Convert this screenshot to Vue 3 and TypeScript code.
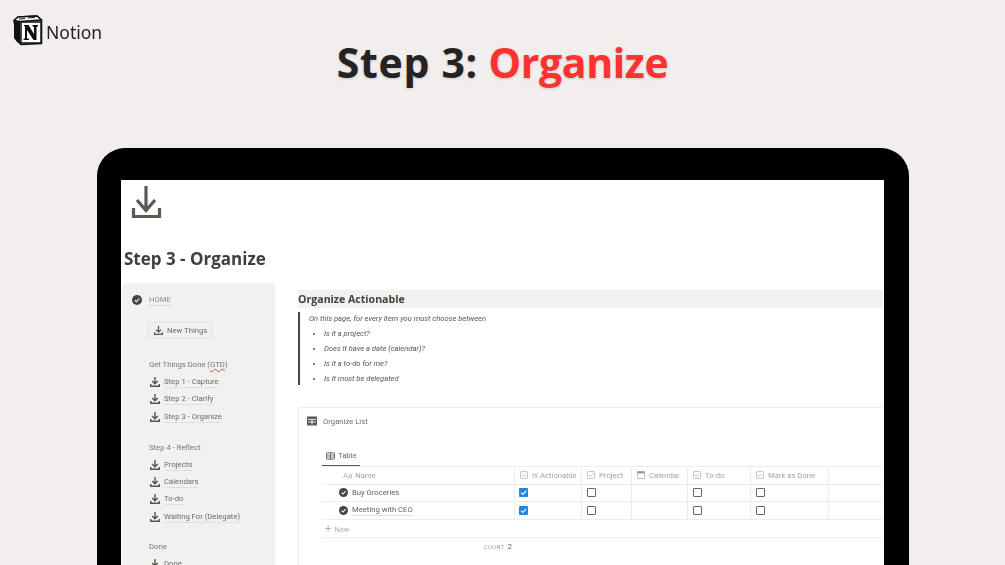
<script setup lang="ts">
const gtd = ['Step 1 - Capture', 'Step 2 - Clarify', 'Step 3 - Organize']
const reflect = ['Projects', 'Calendars', 'To-do', 'Waiting For (Delegate)']
const bullets = ['Is it a project?', 'Does it have a date (calendar)?', 'Is it a to-do for me?', 'Is it must be delegated']
const columns = [
  { label: 'Is Actionable', icon: 'check' },
  { label: 'Project', icon: 'check' },
  { label: 'Calendar', icon: 'cal' },
  { label: 'To-do', icon: 'check' },
  { label: 'Mark as Done', icon: 'check' },
]
const rows = [
  { name: 'Buy Groceries', underline: false },
  { name: 'Meeting with CEO', underline: true },
]
</script>

<template>
  <div class="page">
    <header class="top">
      <div class="brand">
        <svg class="logo" viewBox="0 0 30 31" width="30" height="31">
          <path d="M1 5.5 L4.5 25 L8 29.5 L28.5 28.5 L28.5 5 L24 1 L5 2 Z" fill="#fff" stroke="#111" stroke-width="1.6" stroke-linejoin="round" />
          <path d="M1 5.5 L5 2 L24 1 L28.5 5 L7 6.5 Z" fill="#fff" stroke="#111" stroke-width="1.6" stroke-linejoin="round" />
          <path d="M1 5.5 L7 6.5 L7.5 29.5 L4 27 L1 23 Z" fill="#111" />
          <path d="M6 4 L12 3.5 M15 3 L22 2.5" stroke="#111" stroke-width="1" />
          <rect x="8" y="7" width="20" height="21" fill="#fff" stroke="#111" stroke-width="1.5" />
          <path d="M11 10 H15.5 L21 19 V12 L19.5 11.2 V10 H25 V11.2 L23.5 12 V25 H20.5 L14 15 V23.2 L16 24 V25 H10.5 V24 L12 23.2 V11.6 L11 11 Z" fill="#111" />
        </svg>
        <span class="brand-name">Notion</span>
      </div>
      <h1 class="headline"><span class="lead">Step 3:</span> <span class="accent">Organize</span></h1>
      <div></div>
    </header>

    <section class="device">
      <div class="screen">
        <svg class="page-icon" viewBox="0 0 31 33" width="31" height="33">
          <path d="M15 0 V25 M6 14 L15 24.5 L24 14" fill="none" stroke="#5a5a55" stroke-width="3.2" />
          <path d="M2.5 22 V30.5 H28.5 V22" fill="none" stroke="#5a5a55" stroke-width="3.2" />
        </svg>
        <h2 class="page-title">Step 3 - Organize</h2>

        <div class="columns">
          <aside class="sidebar">
            <div class="home">
              <svg class="disc" viewBox="0 0 10 10" width="10" height="10">
                <circle cx="5" cy="5" r="5" fill="#444441" />
                <path d="M2.8 5.2 L4.4 6.7 L7.3 3.6" fill="none" stroke="#f1f1f0" stroke-width="1.2" />
              </svg>
              <span class="home-link">HOME</span>
            </div>
            <div class="new-things">
              <svg class="dl" viewBox="0 0 10 10" width="9" height="9">
                <path d="M5 0 V6.5 M2.2 4 L5 6.8 L7.8 4" fill="none" stroke="#55554f" stroke-width="1.4" />
                <path d="M.7 7 V9.3 H9.3 V7" fill="none" stroke="#55554f" stroke-width="1.4" />
              </svg>
              New Things
            </div>

            <div class="group-title first">Get Things Done (<span class="squiggle">GTD</span>)</div>
            <div v-for="item in gtd" :key="item" class="nav-item">
              <svg class="dl" viewBox="0 0 10 10" width="10" height="10">
                <path d="M5 0 V6.5 M2.2 4 L5 6.8 L7.8 4" fill="none" stroke="#55554f" stroke-width="1.4" />
                <path d="M.7 7 V9.3 H9.3 V7" fill="none" stroke="#55554f" stroke-width="1.4" />
              </svg>
              <span class="nav-link">{{ item }}</span>
            </div>

            <div class="group-title">Step 4 - Reflect</div>
            <div v-for="item in reflect" :key="item" class="nav-item">
              <svg class="dl" viewBox="0 0 10 10" width="10" height="10">
                <path d="M5 0 V6.5 M2.2 4 L5 6.8 L7.8 4" fill="none" stroke="#55554f" stroke-width="1.4" />
                <path d="M.7 7 V9.3 H9.3 V7" fill="none" stroke="#55554f" stroke-width="1.4" />
              </svg>
              <span class="nav-link">{{ item }}</span>
            </div>

            <div class="group-title">Done</div>
            <div class="nav-item">
              <svg class="dl" viewBox="0 0 10 10" width="10" height="10">
                <path d="M5 0 V6.5 M2.2 4 L5 6.8 L7.8 4" fill="none" stroke="#55554f" stroke-width="1.4" />
                <path d="M.7 7 V9.3 H9.3 V7" fill="none" stroke="#55554f" stroke-width="1.4" />
              </svg>
              <span class="nav-link">Done</span>
            </div>
          </aside>

          <main class="content">
            <h3 class="section-head">Organize Actionable</h3>
            <blockquote class="quote">
              <p class="quote-lead">On this page, for every item you must choose between</p>
              <ul class="bullets">
                <li v-for="b in bullets" :key="b">{{ b }}</li>
              </ul>
            </blockquote>

            <div class="card">
              <div class="card-title">
                <svg viewBox="0 0 10 10" width="10" height="10">
                  <rect x="0" y="0.5" width="10" height="9" rx="1" fill="#55554f" />
                  <path d="M1 3.4 H9 M5 3.4 V8.6 M1 6 H9" stroke="#fff" stroke-width=".9" />
                </svg>
                <span>Organize List</span>
              </div>
              <div class="tab">
                <svg viewBox="0 0 10 8" width="9" height="8">
                  <rect x=".5" y=".5" width="9" height="7" rx="1" fill="none" stroke="#55554f" />
                  <path d="M.5 3 H9.5 M.5 5.2 H9.5 M5 .5 V7.5" stroke="#55554f" stroke-width=".8" />
                </svg>
                Table
              </div>

              <div class="tbl">
                <div class="tr head">
                  <div class="td name-col"><span class="aa">Aa</span> Name</div>
                  <div v-for="c in columns" :key="c.label" class="td">
                    <svg v-if="c.icon === 'check'" viewBox="0 0 8 8" width="8" height="8">
                      <rect x=".5" y=".5" width="7" height="7" rx=".8" fill="none" stroke="#aaa" stroke-width=".7" />
                      <path d="M2 4 L3.5 5.5 L6 2.5" fill="none" stroke="#aaa" stroke-width=".7" />
                    </svg>
                    <svg v-else viewBox="0 0 8 8" width="8" height="8">
                      <rect x=".3" y=".5" width="7.4" height="7" rx=".8" fill="none" stroke="#999" stroke-width=".7" />
                      <rect x=".3" y=".5" width="7.4" height="2" fill="#999" />
                    </svg>
                    {{ c.label }}
                  </div>
                  <div class="td last"></div>
                </div>
                <div v-for="r in rows" :key="r.name" class="tr">
                  <div class="td name-col body-name">
                    <svg viewBox="0 0 10 10" width="9" height="9">
                      <circle cx="5" cy="5" r="5" fill="#444441" />
                      <path d="M2.8 5.2 L4.4 6.7 L7.3 3.6" fill="none" stroke="#fff" stroke-width="1.2" />
                    </svg>
                    <span :class="{ 'nav-link': r.underline }">{{ r.name }}</span>
                  </div>
                  <div class="td"><span class="box on">
                    <svg viewBox="0 0 9 9" width="9" height="9"><path d="M2 4.6 L3.9 6.4 L7.2 2.8" fill="none" stroke="#fff" stroke-width="1.1" /></svg>
                  </span></div>
                  <div class="td"><span class="box"></span></div>
                  <div class="td"></div>
                  <div class="td"><span class="box"></span></div>
                  <div class="td"><span class="box"></span></div>
                  <div class="td last"></div>
                </div>
                <div class="new-row"><span class="plus">+</span> New</div>
                <div class="count"><span class="count-label">COUNT</span> <span class="count-num">2</span></div>
              </div>
            </div>
          </main>
        </div>
      </div>
    </section>
  </div>
</template>

<style>
html, body { margin: 0; overflow: hidden; }
</style>

<style scoped>
.page {
  width: 1005px;
  height: 565px;
  overflow: hidden;
  background: #f1eeed;
  font-family: "Open Sans", sans-serif;
}
.top {
  height: 148px;
  box-sizing: border-box;
  display: grid;
  grid-template-columns: 1fr auto 1fr;
  align-items: start;
}
.brand {
  display: flex;
  align-items: center;
  gap: 3px;
  padding: 15px 0 0 13px;
  filter: blur(.3px);
}
.logo { flex: none; }
.brand-name {
  font-family: "Noto Sans", sans-serif;
  font-size: 17.5px;
  padding-top: 3px;
  color: #222;
}
.headline {
  margin: 34px 0 0;
  font-size: 41px;
  line-height: 56px;
  font-weight: 700;
  color: #232323;
  text-shadow: 0 1px 3px rgba(0, 0, 0, .16);
  white-space: nowrap;
}
.lead { letter-spacing: .7px; }
.accent { color: #ff3131; letter-spacing: -.4px; }
.device {
  margin: 0 96px 0 97px;
  height: 450px;
  box-sizing: border-box;
  background: #000;
  border-radius: 28px 28px 0 0;
  padding: 32px 25px 0 24px;
}
.screen {
  height: 100%;
  background: #fff;
  overflow: hidden;
  color: #37352f;
  filter: blur(.45px);
}
.page-icon { display: block; margin: 6px 0 0 10px; }
.page-title {
  margin: 27px 0 0 3px;
  font-size: 17px;
  line-height: 25px;
  font-weight: 700;
  color: #3f3e39;
}
.columns {
  display: flex;
  margin-top: 13px;
}
.sidebar {
  flex: none;
  width: 151px;
  margin-left: 1px;
  height: 400px;
  background: #f1f1f0;
  border-radius: 3px;
  padding: 10px 0 0 10px;
  box-sizing: border-box;
  font-family: Roboto, sans-serif;
  font-size: 7.7px;
  color: #6b6a66;
  box-shadow: 2px -1px 0 #fbeeee;
}
.home { display: flex; align-items: center; gap: 7px; height: 12px; }
.disc { flex: none; }
.home-link { color: #8b8a86; border-bottom: 1px solid #d8d8d5; line-height: 11px; }
.new-things {
  margin: 16px 0 0 16px;
  width: 64px;
  height: 17px;
  display: flex;
  align-items: center;
  gap: 4px;
  padding-left: 5px;
  box-sizing: border-box;
  border: 1px solid #e2e2df;
  border-radius: 3px;
  white-space: nowrap;
}
.group-title { margin: 16.3px 0 2.4px 17px; line-height: 12px; color: #77766f; }
.group-title.first { margin-top: 20px; }
.squiggle { text-decoration: underline wavy #e03e3e .6px; }
.nav-item {
  height: 17.3px;
  display: flex;
  align-items: center;
  gap: 4px;
  margin-left: 18px;
}
.dl { flex: none; }
.nav-link { border-bottom: 1px solid #dfdfdc; line-height: 11px; }
.content { flex: none; width: 585px; margin-left: 25px; }
.section-head {
  margin: 6px 0 0;
  height: 18px;
  line-height: 18px;
  background: #f1f1f0;
  font-size: 10.6px;
  font-weight: 700;
  color: #42413c;
}
.quote {
  margin: 4px 0 0;
  height: 73px;
  border-left: 2px solid #45443f;
  padding-left: 9px;
  font-family: Roboto, sans-serif;
  font-style: italic;
  font-size: 7.6px;
  color: #55544f;
}
.quote-lead { margin: 0; line-height: 14px; }
.bullets { margin: 0; padding: 0 0 0 15px; }
.bullets li { height: 15px; line-height: 15px; }
.card {
  margin-top: 22px;
  height: 170px;
  border: 1px solid #ededeb;
  border-right: 0;
  border-radius: 3px 0 0 0;
  font-family: Roboto, sans-serif;
}
.card-title {
  display: flex;
  align-items: center;
  gap: 6px;
  padding: 6px 0 0 8px;
  font-size: 7.7px;
  color: #6e6d68;
  height: 14px;
}
.tab {
  margin: 16px 0 0 23px;
  width: 38px;
  height: 22px;
  display: flex;
  align-items: center;
  gap: 3px;
  padding: 2px 0 0 4px;
  box-sizing: border-box;
  font-size: 7.7px;
  color: #6b6a66;
  border-bottom: 1.5px solid #55554f;
}
.tbl { margin-left: 23px; font-size: 7.7px; color: #65645f; }
.tr {
  display: grid;
  grid-template-columns: 193px 67px 50px 56px 63px 78px 1fr;
  height: 16.5px;
  border-bottom: 1px solid #ededeb;
  box-sizing: content-box;
}
.tr.head { border-top: 1px solid #ededeb; color: #a3a29e; height: 16.5px; }
.td {
  display: flex;
  align-items: center;
  gap: 4px;
  padding-left: 5px;
  border-right: 1px solid #ededeb;
  box-sizing: border-box;
  white-space: nowrap;
  min-width: 0;
}
.td.last { border-right: 0; }
.head .name-col { padding-left: 21px; gap: 0; }
.aa { margin-right: 3px; color: #b0afab; }
.body-name { padding-left: 17px; gap: 4px; }
.box {
  width: 9px;
  height: 9px;
  box-sizing: border-box;
  border: 1.2px solid #666;
  border-radius: 1px;
  display: block;
}
.box.on { border: 0; background: #2383e2; margin-left: -1px; }
.box svg { display: block; }
.new-row {
  height: 17px;
  line-height: 17px;
  border-bottom: 1px solid #ededeb;
  padding-left: 3px;
  color: #b0afab;
}
.plus { font-size: 11px; margin-right: 1px; }
.count { margin: 2px 0 0 162px; line-height: 14px; }
.count-label { font-size: 5.5px; letter-spacing: .5px; color: #999; }
.count-num { font-size: 8px; margin-left: 1px; color: #65645f; }
</style>
